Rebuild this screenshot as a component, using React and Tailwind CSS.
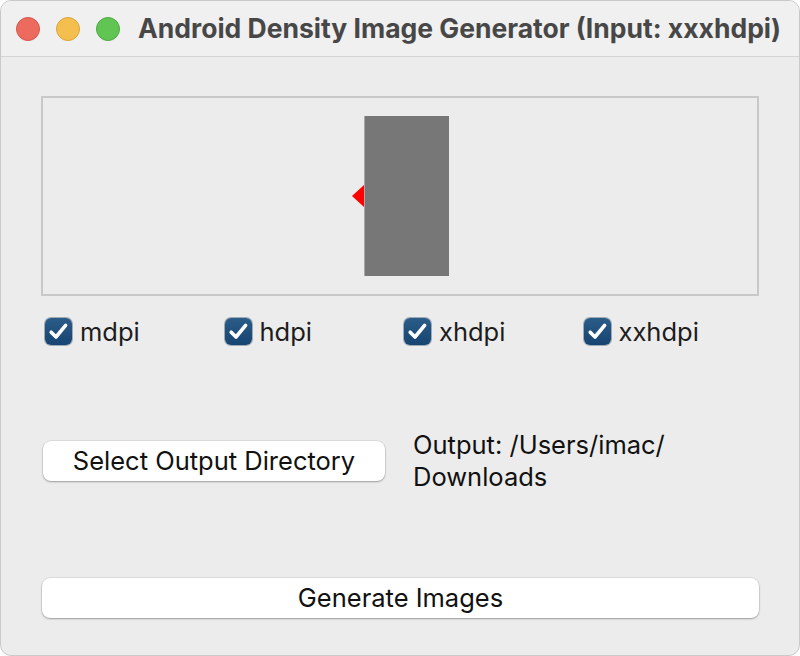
import React from "react";

function Check({ label }) {
  return (
    <div className="flex items-center gap-[8px] pl-[4px]">
      <div className="w-[27px] h-[27px] rounded-[6px] bg-gradient-to-b from-[#2b5c88] to-[#174470] flex items-center justify-center shadow-[0_0_0_1px_rgba(20,50,80,0.35)]">
        <svg width="21" height="19" viewBox="0 0 21 19" fill="none">
          <path d="M3.2 10.2 L8 15 L17.6 3.4" stroke="white" strokeWidth="3.6" strokeLinecap="round" strokeLinejoin="round" />
        </svg>
      </div>
      <span className="text-[25.5px] text-[#1c1c1c] leading-none">{label}</span>
    </div>
  );
}

export default function App() {
  return (
    <div className="w-[800px] h-[656px] bg-white" style={{ fontFamily: "Inter, 'Liberation Sans', sans-serif" }}>
      <div className="w-full h-full rounded-[11px] border border-[#c9c9c9] overflow-hidden bg-[#ececec] flex flex-col">
        <div className="h-[56px] shrink-0 bg-[#f0f0f0] border-b border-[#d4d4d4] flex items-center pl-[15px]">
          <div className="flex gap-[16px]">
            <div className="w-[24px] h-[24px] rounded-full bg-[#ed6a5e] border border-[#d65448]" />
            <div className="w-[24px] h-[24px] rounded-full bg-[#f5bf4f] border border-[#d9a33a]" />
            <div className="w-[24px] h-[24px] rounded-full bg-[#61c554] border border-[#4ea842]" />
          </div>
          <div className="ml-[18px] text-[26.5px] font-bold text-[#474747] whitespace-nowrap">
            Android Density Image Generator (Input: xxxhdpi)
          </div>
        </div>
        <div className="flex-1 flex flex-col px-[40px]">
          <div className="mt-[39px] h-[200px] border-2 border-[#c8c8c8] bg-[#ececec] flex items-center justify-center">
            <div className="flex items-center">
              <svg width="12" height="22" viewBox="0 0 12 22">
                <polygon points="0,11 12,0 12,22" fill="#ff0000" />
              </svg>
              <div className="w-[85px] h-[160px] bg-[#777777] border-l border-[#a8a8a8]" />
            </div>
          </div>
          <div className="mt-[22px] grid grid-cols-4">
            <Check label="mdpi" />
            <Check label="hdpi" />
            <Check label="xhdpi" />
            <Check label="xxhdpi" />
          </div>
          <div className="mt-[84px] flex items-center">
            <button className="ml-[2px] w-[342px] h-[40px] rounded-[8px] bg-white shadow-[0_1px_2px_rgba(0,0,0,0.3),0_0_0_0.5px_rgba(0,0,0,0.12)] text-[25.5px] text-[#111] flex items-center justify-center">
              Select Output Directory
            </button>
            <div className="ml-[28px] text-[25.5px] leading-[32px] text-[#111]">
              Output: /Users/imac/
              <br />
              Downloads
            </div>
          </div>
          <button className="mt-[85px] ml-[1px] w-[717px] h-[40px] rounded-[8px] bg-white shadow-[0_1px_2px_rgba(0,0,0,0.3),0_0_0_0.5px_rgba(0,0,0,0.12)] text-[25.5px] text-[#111] flex items-center justify-center">
            Generate Images
          </button>
        </div>
      </div>
    </div>
  );
}
